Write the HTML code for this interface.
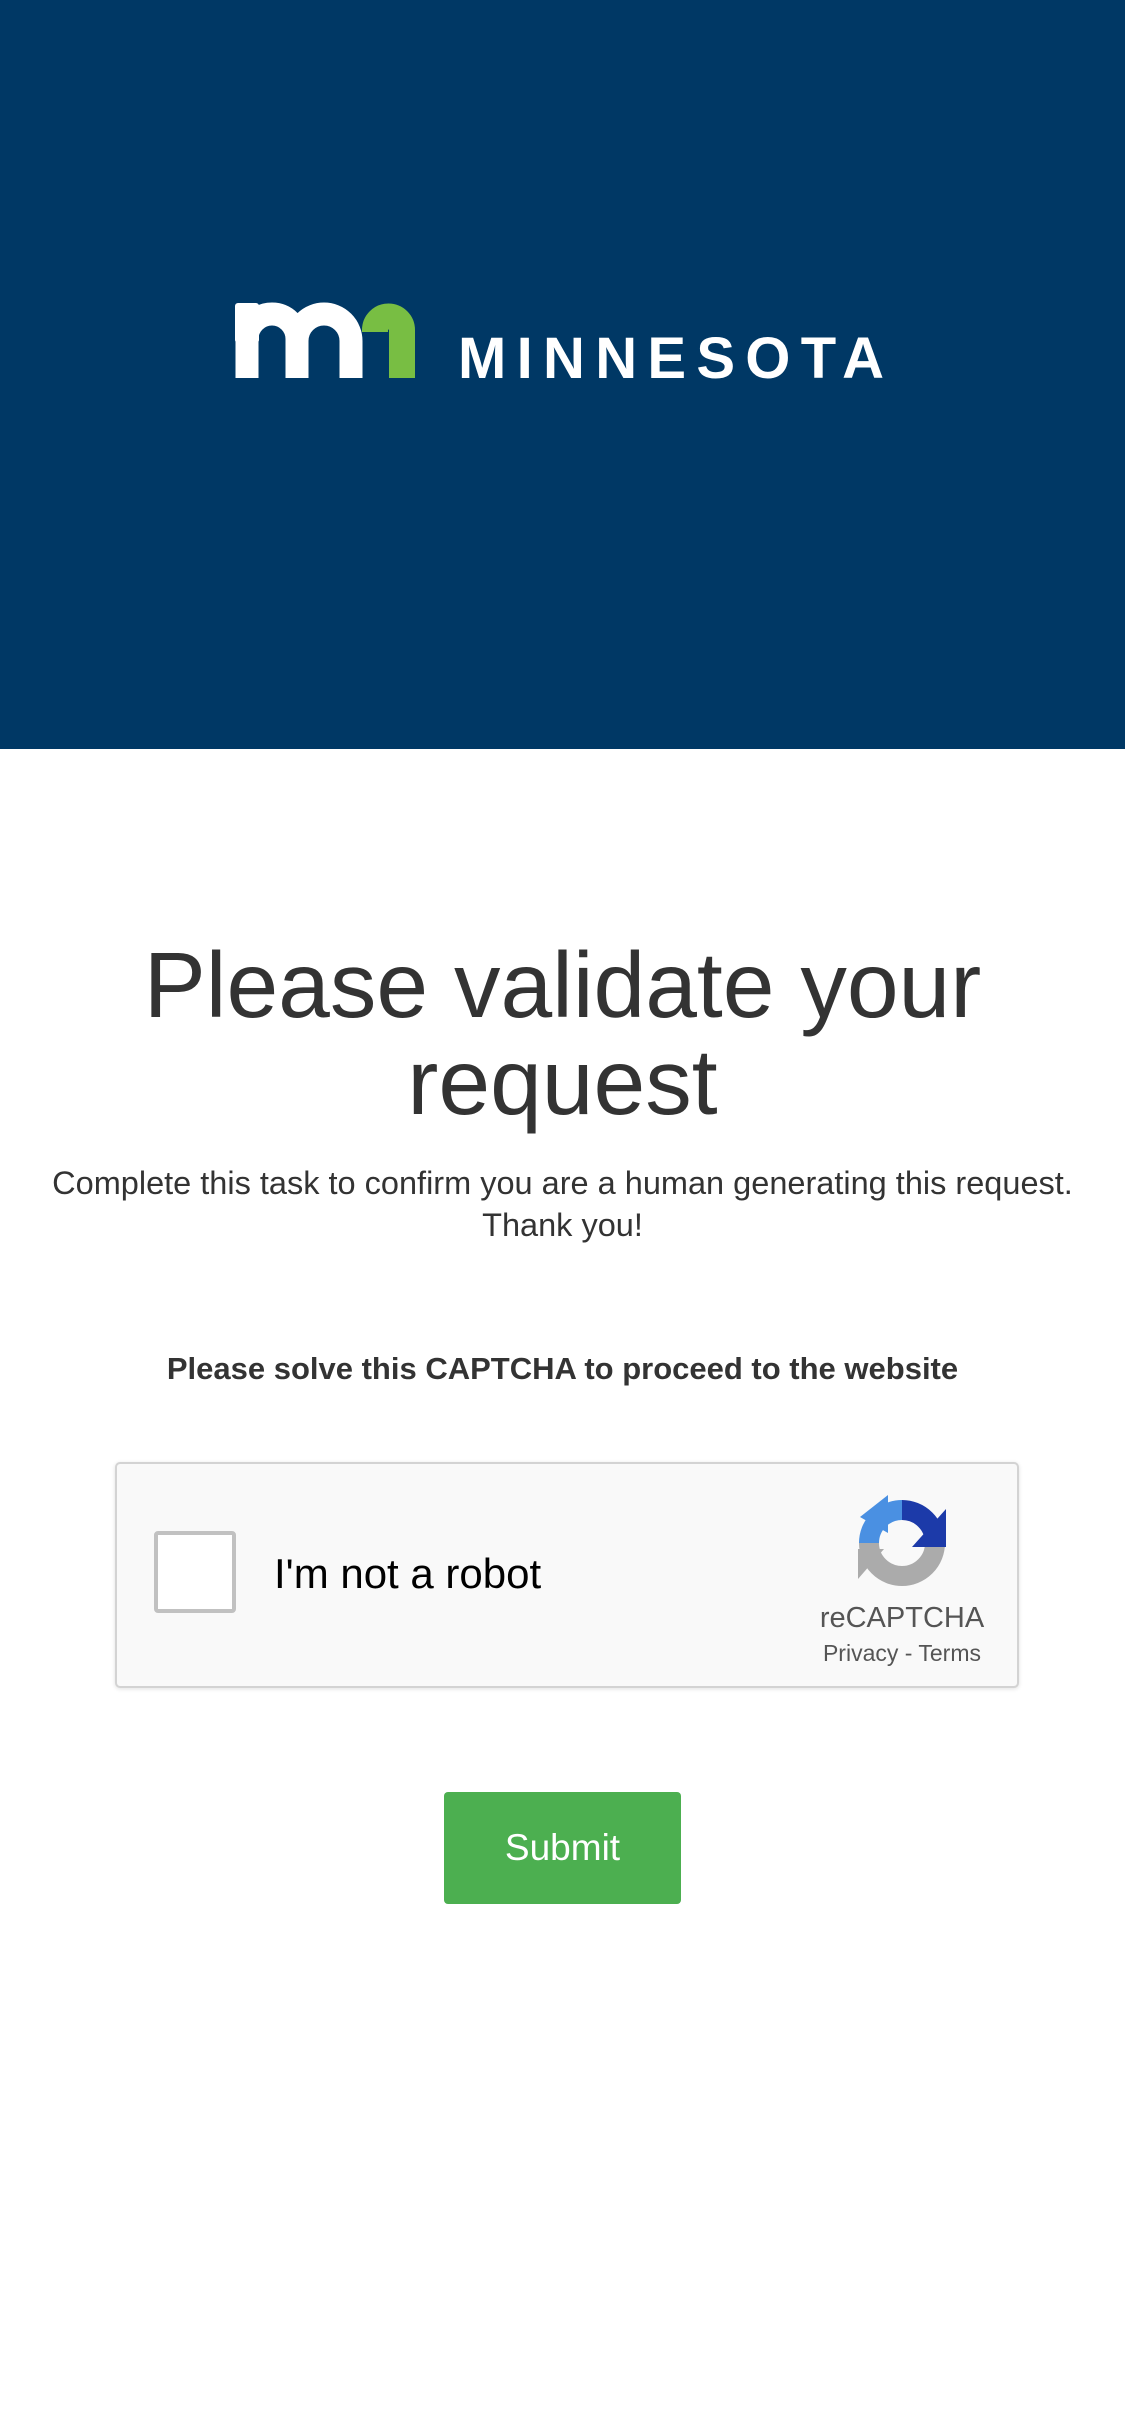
<!DOCTYPE html>
<html><head><meta charset="utf-8"><style>
*{margin:0;padding:0;box-sizing:border-box}
body{width:1125px;height:2436px;background:#fff;position:relative;font-family:"Liberation Sans",sans-serif;color:#333;overflow:hidden}
.hdr{position:absolute;left:0;top:0;width:1125px;height:749px;background:#003865}
.t{position:absolute;left:0;width:1125px;text-align:center;white-space:nowrap}
.cap{position:absolute;left:115px;top:1462px;width:904px;height:226px;background:#f9f9f9;border:2px solid #d3d3d3;border-radius:5px;box-shadow:0 1px 4px rgba(0,0,0,.12)}
.cb{position:absolute;left:37px;top:67px;width:82px;height:82px;background:#fff;border:4px solid #c1c1c1;border-radius:4px}
.btn{position:absolute;left:444px;top:1792px;width:237px;height:112px;background:#4caf50;border-radius:4px;color:#fff;font-size:37px;line-height:112px;text-align:center}
</style></head><body>
<div class="hdr">
<svg width="1125" height="749" style="position:absolute;left:0;top:0">
<g fill="none" stroke="#fff" stroke-width="23">
<path d="M247 378 V339 A25 25 0 0 1 297 339 V378"/>
<path d="M297 378 V341 A27 27 0 0 1 351 341 V378"/>
</g>
<rect x="235" y="303" width="24" height="40" fill="#fff" rx="3"/>
<path d="M375 332 V330 A13.5 13.5 0 0 1 402 330 V378" fill="none" stroke="#78be43" stroke-width="26"/>
<text x="458" y="378" fill="#fff" font-family="Liberation Sans" font-weight="bold" font-size="58" textLength="426" lengthAdjust="spacing">MINNESOTA</text>
</svg>
</div>
<div class="t" style="top:937px;font-size:93px;line-height:97px">Please validate your<br>request</div>
<div class="t" style="top:1162px;font-size:32.5px;line-height:42px">Complete this task to confirm you are a human generating this request.<br>Thank you!</div>
<div class="t" style="top:1351px;font-size:31px;line-height:36px;font-weight:bold">Please solve this CAPTCHA to proceed to the website</div>
<div class="cap">
<div class="cb"></div>
<div style="position:absolute;left:157px;top:85px;font-size:42px;line-height:50px;color:#000">I'm not a robot</div>
<svg width="100" height="100" style="position:absolute;left:735px;top:29px" viewBox="0 0 100 100">
<g fill="none" stroke-width="20">
<path d="M50 50 m-33 0 A33 33 0 0 1 50 17" stroke="#4a90e2"/>
<path d="M50 17 A33 33 0 0 1 83 50" stroke="#1c3aa9"/>
<path d="M83 50 A33 33 0 0 1 17 50" stroke="#ababab"/>
</g>
<path d="M8 24 L36 2 L36 40 Z" fill="#4a90e2"/>
<path d="M94 16 L94 54 L60 54 Z" fill="#1c3aa9"/>
<path d="M6 56 L32 56 L6 86 Z" fill="#ababab"/>
</svg>
<div style="position:absolute;left:685px;width:200px;top:138px;font-size:29px;text-align:center;color:#555">reCAPTCHA</div>
<div style="position:absolute;left:675px;width:220px;top:176px;font-size:23px;text-align:center;color:#555">Privacy - Terms</div>
</div>
<div class="btn">Submit</div>
</body></html>
